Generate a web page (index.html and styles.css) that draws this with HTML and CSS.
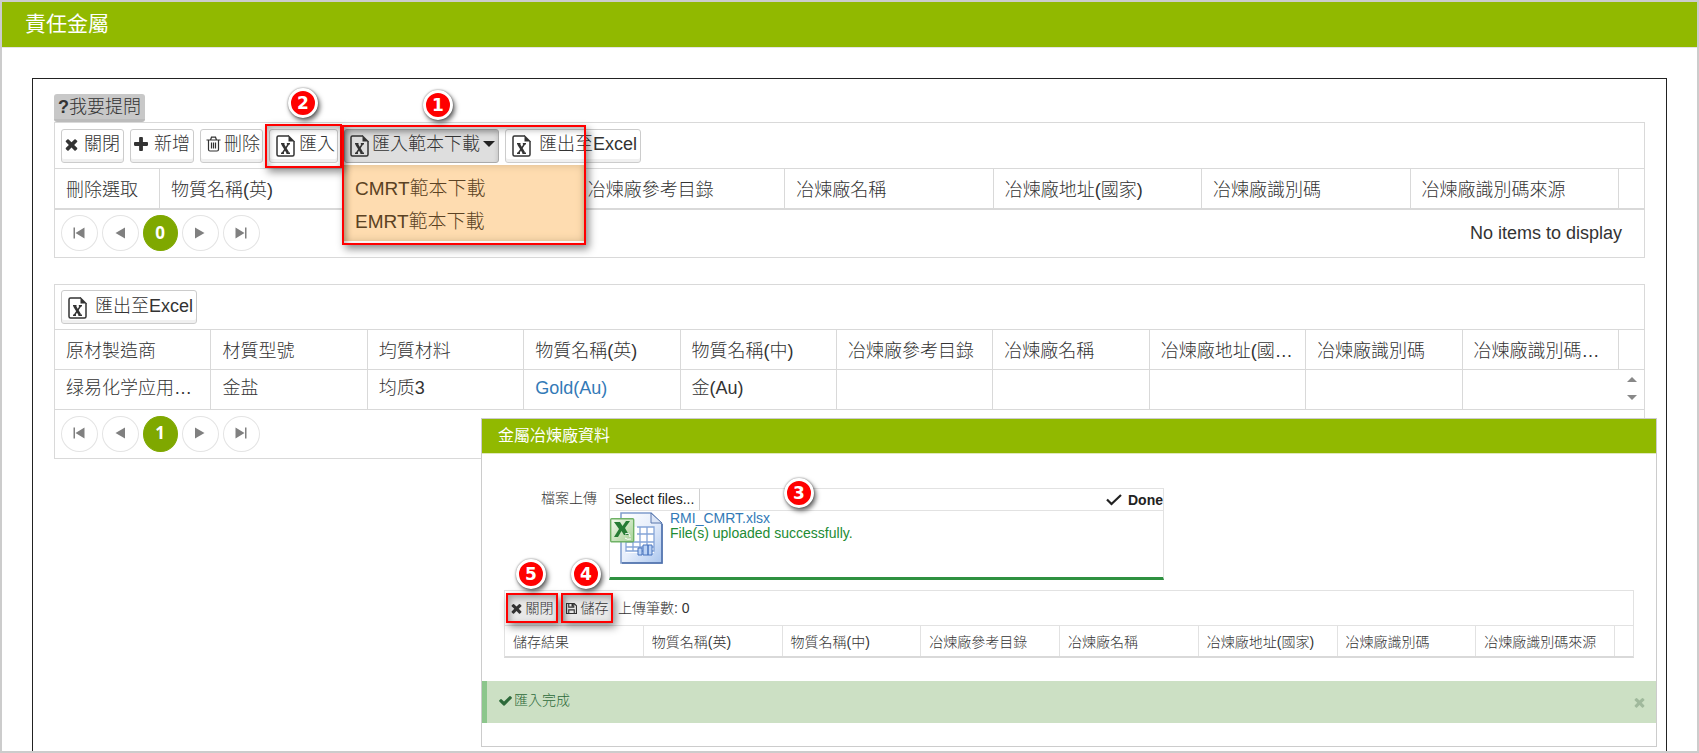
FILE: index.html
```html
<!DOCTYPE html>
<html lang="zh-Hant">
<head>
<meta charset="utf-8">
<title>責任金屬</title>
<link rel="stylesheet" href="styles.css">
</head>
<body>
<svg class="sprite" aria-hidden="true">
  <symbol id="times" viewBox="250 250 1290 1330"><path d="M1490 1322q0 40-28 68l-136 136q-28 28-68 28t-68-28l-294-294-294 294q-28 28-68 28t-68-28l-136-136q-28-28-28-68t28-68l294-294-294-294q-28-28-28-68t28-68l136-136q28-28 68-28t68 28l294 294 294-294q28-28 68-28t68 28l136 136q28 28 28 68t-28 68l-294 294 294 294q28 28 28 68z"/></symbol>
  <symbol id="plus" viewBox="190 128 1410 1410"><path d="M1600 736v192q0 40-28 68t-68 28h-416v416q0 40-28 68t-68 28h-192q-40 0-68-28t-28-68v-416h-416q-40 0-68-28t-28-68v-192q0-40 28-68t68-28h416v-416q0-40 28-68t68-28h192q40 0 68 28t28 68v416h416q40 0 68 28t28 68z"/></symbol>
  <symbol id="check" viewBox="110 240 1570 1300"><path d="M1671 566q0 40-28 68l-724 724-136 136q-28 28-68 28t-68-28l-136-136-362-362q-28-28-28-68t28-68l136-136q28-28 68-28t68 28l294 295 656-657q28-28 68-28t68 28l136 136q28 28 28 68z"/></symbol>
  <symbol id="trash" viewBox="0 0 15 15"><path d="M0.500 3.500H14.500M4.500 3.500L5.500 0.700H9.500L10.500 3.500M2.500 3.500V13Q2.500 14.500 4 14.500H11Q12.500 14.500 12.500 13V3.500M5.500 6V12M7.500 6V12M9.500 6V12" fill="none" stroke="currentColor" stroke-width="1.200"/></symbol>
  <symbol id="xls" viewBox="0 0 19 22"><path d="M13 1H2.500Q1 1 1 2.500V19.500Q1 21 2.500 21H16.500Q18 21 18 19.500V6" fill="none" stroke="currentColor" stroke-width="1.500"/><path d="M12.500 0L19 6.500H12.500Z"/><path d="M6.500 9L12 18" stroke="currentColor" stroke-width="2.600"/><path d="M12.500 9L6.500 18M5 8.700H8.500M10.800 8.700H14M5 18.300H8M10.500 18.300H14" stroke="currentColor" stroke-width="1.400" fill="none"/></symbol>
  <symbol id="save" viewBox="0 0 12 12"><path d="M0.600 0.600H9L11.400 3V11.400H0.600ZM3 0.600V4.500H8.500V0.600M3 11.400V7.500H9V11.400" fill="none" stroke="currentColor" stroke-width="1.200"/><path d="M6 1H8V4H6Z"/></symbol>
  <symbol id="tick" viewBox="0 0 16 12"><path d="M1 5.500L5.500 10L15 1" fill="none" stroke="currentColor" stroke-width="2.200"/></symbol>
  <symbol id="first" viewBox="0 0 12 12"><path d="M0.500 0.500H2V11.500H0.500ZM11.500 0.500V11.500L2.500 6Z"/></symbol>
  <symbol id="prev" viewBox="0 0 12 12"><path d="M11 0.500V11.500L1.500 6Z"/></symbol>
  <symbol id="next" viewBox="0 0 12 12"><path d="M1 0.500V11.500L10.500 6Z"/></symbol>
  <symbol id="last" viewBox="0 0 12 12"><path d="M11.500 0.500H10V11.500H11.500ZM0.500 0.500V11.500L9.500 6Z"/></symbol>
</svg>
<div class="frame">
  <header class="titlebar"><h1>責任金屬</h1></header>
  <main class="panel">
    <button class="ask" type="button"><b>?</b>我要提問</button>
    <section class="grid">
      <div class="toolbar">
        <button class="btn" type="button"><svg class="i13"><use href="#times"/></svg>關閉</button>
        <button class="btn" type="button"><svg class="i14"><use href="#plus"/></svg>新增</button>
        <button class="btn tight" type="button"><svg class="i15"><use href="#trash"/></svg>刪除</button>
        <div class="anchor">
          <button class="btn import" type="button"><svg class="xls"><use href="#xls"/></svg>匯入</button>
          <span class="mark mark-import"><span class="badge">2</span></span>
        </div>
        <div class="anchor">
          <button class="btn open" type="button"><svg class="xls"><use href="#xls"/></svg>匯入範本下載<i class="caret"></i></button>
          <div class="menu"><a href="#cmrt">CMRT範本下載</a><a href="#emrt">EMRT範本下載</a></div>
          <span class="mark mark-menu"><span class="badge">1</span></span>
        </div>
        <button class="btn export" type="button"><svg class="xls"><use href="#xls"/></svg>匯出至Excel</button>
      </div>
      <table>
        <colgroup><col class="c-pick"><col><col><col><col><col><col><col><col class="c-end"></colgroup>
        <thead><tr><th>刪除選取</th><th>物質名稱(英)</th><th></th><th>冶煉廠參考目錄</th><th>冶煉廠名稱</th><th>冶煉廠地址(國家)</th><th>冶煉廠識別碼</th><th>冶煉廠識別碼來源</th><th></th></tr></thead>
      </table>
      <div class="pager double">
        <button type="button" aria-label="First"><svg><use href="#first"/></svg></button>
        <button type="button" aria-label="Previous"><svg><use href="#prev"/></svg></button>
        <button type="button" class="current">0</button>
        <button type="button" aria-label="Next"><svg><use href="#next"/></svg></button>
        <button type="button" aria-label="Last"><svg><use href="#last"/></svg></button>
        <span class="info">No items to display</span>
      </div>
    </section>
    <section class="grid second">
      <div class="toolbar short">
        <button class="btn export" type="button"><svg class="xls"><use href="#xls"/></svg>匯出至Excel</button>
      </div>
      <table>
        <colgroup><col><col><col><col><col><col><col><col><col><col><col class="c-end"></colgroup>
        <thead><tr><th>原材製造商</th><th>材質型號</th><th>均質材料</th><th>物質名稱(英)</th><th>物質名稱(中)</th><th>冶煉廠參考目錄</th><th>冶煉廠名稱</th><th>冶煉廠地址(國家)</th><th>冶煉廠識別碼</th><th>冶煉廠識別碼來源</th><th></th></tr></thead>
        <tbody><tr><td lang="zh-Hans">绿易化学应用材料</td><td lang="zh-Hans">金盐</td><td lang="zh-Hans">均质3</td><td><a href="#gold">Gold(Au)</a></td><td>金(Au)</td><td></td><td></td><td></td><td></td><td colspan="2"><div class="spin"><i class="up"></i><i class="down"></i></div></td></tr></tbody>
      </table>
      <div class="pager">
        <button type="button" aria-label="First"><svg><use href="#first"/></svg></button>
        <button type="button" aria-label="Previous"><svg><use href="#prev"/></svg></button>
        <button type="button" class="current">1</button>
        <button type="button" aria-label="Next"><svg><use href="#next"/></svg></button>
        <button type="button" aria-label="Last"><svg><use href="#last"/></svg></button>
      </div>
    </section>
  </main>
  <section class="dialog" role="dialog" aria-labelledby="dlg">
    <h2 id="dlg">金屬冶煉廠資料</h2>
    <div class="form">
      <span class="label">檔案上傳</span>
      <div class="upload">
        <div class="upload-head">
          <button class="select" type="button">Select files...</button>
          <span class="done"><svg><use href="#tick"/></svg>Done</span>
        </div>
        <div class="file">
          <svg class="doc" viewBox="0 0 53 52">
            <defs>
              <linearGradient id="pg" x1="0" y1="0" x2="1" y2="1"><stop offset="0" stop-color="#fff"/><stop offset=".5" stop-color="#e6eefb"/><stop offset="1" stop-color="#a9c5ee"/></linearGradient>
              <linearGradient id="gx" x1="0" y1="0" x2="1" y2="1"><stop offset="0" stop-color="#f4faef"/><stop offset="1" stop-color="#a5d195"/></linearGradient>
            </defs>
            <path d="M11 1H41L52 12V51H11Z" fill="url(#pg)" stroke="#7f9ccb" stroke-width="1.500"/>
            <path d="M12 51H52V12" fill="none" stroke="#4f70ab" stroke-width="1.500"/>
            <path d="M41 1V11H52Z" fill="#dbe5f6" stroke="#5877ad"/>
            <path d="M16 15H44V41H16Z" fill="#fff"/>
            <path d="M27 15H44V39H16V30M27 22H44M16 30H44M16 35H44M23 30V39M30 15V39M37 15V39" fill="none" stroke="#85a5d8" stroke-width="1.300"/>
            <path d="M28 36H32V43H28ZM33 33H38V43H33ZM38 33H42V43H38Z" fill="#bcd3f5" stroke="#4672bd"/>
            <rect x=".7" y="6.700" width="23" height="23" rx="1" fill="url(#gx)" stroke="#6fb265" stroke-width="1.400"/>
            <path d="M4 10H10L12.500 14L16 9H20L15 16L19 23H14L11.500 19L8 25H4L9 17Z" fill="#267c35"/>
            <path d="M15 22Q20 20 20 25M15 26Q17 28 21 27" stroke="#fff" fill="none"/>
          </svg>
          <div class="file-text"><a href="#file">RMI_CMRT.xlsx</a><span>File(s) uploaded successfully.</span></div>
        </div>
        <span class="badge badge-upload">3</span>
      </div>
    </div>
    <div class="grid small">
      <div class="toolbar">
        <div class="anchor">
          <button class="btn" type="button"><svg><use href="#times"/></svg>關閉</button>
          <span class="mark"><span class="badge">5</span></span>
        </div>
        <div class="anchor">
          <button class="btn" type="button"><svg><use href="#save"/></svg>儲存</button>
          <span class="mark"><span class="badge">4</span></span>
        </div>
        <span class="count">上傳筆數: 0</span>
      </div>
      <table>
        <colgroup><col><col><col><col><col><col><col><col><col class="c-end"></colgroup>
        <thead><tr><th>儲存結果</th><th>物質名稱(英)</th><th>物質名稱(中)</th><th>冶煉廠參考目錄</th><th>冶煉廠名稱</th><th>冶煉廠地址(國家)</th><th>冶煉廠識別碼</th><th>冶煉廠識別碼來源</th><th></th></tr></thead>
      </table>
    </div>
    <div class="alert" role="status">
      <svg class="ok"><use href="#check"/></svg><span>匯入完成</span>
      <button type="button" aria-label="Close"><svg><use href="#times"/></svg></button>
    </div>
  </section>
</div>
</body>
</html>
```
FILE: styles.css
```css
* { box-sizing: border-box; }
body {
  margin: 0;
  color: #333;
  font: 18px/24px "Liberation Sans", "Noto Sans CJK TC", sans-serif;
  font-weight: 300;
}
button { font: inherit; color: inherit; margin: 0; cursor: pointer; }
a { color: #337ab7; text-decoration: none; }
svg { fill: currentColor; flex: none; }
.sprite { display: none; }

.frame {
  position: relative;
  display: flex;
  flex-direction: column;
  height: 100vh;
  border: 2px solid #ccc;
  overflow: hidden;
}
.titlebar { flex: none; height: 46px; padding: 0 23px; background: #91b900; border-bottom: 1px solid #e4e4e4; }
.titlebar h1 { margin: 0; color: #fff; font-size: 21px; font-weight: 400; line-height: 44px; }

.panel {
  flex: 1;
  margin: 30px 30px 0;
  padding: 15px 21px 0;
  border: 1px solid #222;
  border-bottom: 0;
}
.ask {
  display: block;
  height: 28px;
  padding: 0 4px;
  background: #c8c8c8;
  border: 0;
  border-bottom: 3px solid #bbb;
  border-radius: 3px;
  line-height: 24px;
}
.ask b { font-weight: 700; }

.grid { border: 1px solid #d9d9d9; }
.second { margin-top: 26px; }
.toolbar { display: flex; align-items: center; gap: 6px; height: 45px; padding: 0 6px; }
.short { height: 44px; }
.anchor { position: relative; }
.btn {
  display: flex;
  align-items: center;
  justify-content: center;
  gap: 6px;
  height: 34px;
  padding: 0 3px 3px;
  background: #fff;
  border: 1px solid #ccc;
  border-radius: 3px;
  box-shadow: inset 0 -3px #f0f0f0;
  white-space: nowrap;
}
.tight { gap: 3px; padding-left: 5px; padding-right: 2px; }
.i13 { width: 13px; height: 13px; }
.i14 { width: 14px; height: 14px; }
.i15 { width: 15px; height: 16px; }
.xls { width: 19px; height: 22px; margin-top: 4px; }
.import { gap: 4px; padding-left: 6px; padding-right: 2px; }
.open { gap: 3px; padding-left: 5px; background: #dedede; box-shadow: inset 0 3px 5px #bbb; border-color: #aaa; }
.export { gap: 8px; padding-left: 6px; }
.caret { border: 6px solid transparent; border-top-color: #222; border-bottom: 0; }

.menu {
  position: absolute;
  z-index: 2;
  top: 36px;
  left: 0;
  width: 240px;
  padding: 7px 11px 3px;
  background: #fedcb0;
  box-shadow: inset 0 0 8px #d8b98e;
}
.menu a { display: block; color: #5b4223; font-size: 19px; line-height: 33px; }

.mark {
  position: absolute;
  z-index: 3;
  inset: -4px;
  border: 2px solid #f00;
  box-shadow: 3px 4px 8px rgba(0, 0, 0, .45), inset 2px 3px 6px rgba(0, 0, 0, .3);
  pointer-events: none;
}
.mark-import { inset: -5px -4px; }
.mark-menu { inset: -4px auto auto -2px; width: 244px; height: 120px; }
.badge {
  position: absolute;
  top: -38px;
  left: 21px;
  width: 30px;
  height: 30px;
  border: 3px solid #fff;
  border-radius: 50%;
  background: #f00;
  box-shadow: 2px 3px 5px rgba(0, 0, 0, .6), 0 0 2px rgba(0, 0, 0, .5);
  color: #fff;
  font: bold 17px/24px "DejaVu Sans", sans-serif;
  text-align: center;
}
.mark-menu .badge { left: 79px; top: -37px; }

table { width: 100%; table-layout: fixed; border-collapse: separate; border-spacing: 0; }
.c-pick { width: 105px; }
.c-end { width: 25px; }
th, td {
  height: 40px;
  padding: 0 11px;
  border-top: 1px solid #d9d9d9;
  border-right: 1px solid #d9d9d9;
  font-weight: 300;
  text-align: left;
  white-space: nowrap;
  overflow: hidden;
  text-overflow: ellipsis;
}
th { padding-top: 3px; }
td { padding-bottom: 3px; }
th:last-child, td:last-child { border-right: 0; }
td:last-child { padding-right: 7px; }
.spin { display: flex; flex-direction: column; align-items: flex-end; gap: 13px; }
.spin i { border: 5px solid transparent; }
.spin .up { border-bottom-color: #888; border-top: 0; }
.spin .down { border-top-color: #888; border-bottom: 0; }

.pager { display: flex; align-items: center; gap: 4px; height: 49px; padding: 0 22px 1px 6px; border-top: 1px solid #d9d9d9; }
.double { border-top-width: 2px; }
.pager button {
  display: flex;
  align-items: center;
  justify-content: center;
  width: 37px;
  height: 36px;
  padding: 0 1px 1px 0;
  background: #fff;
  border: 1px solid #e4e4e4;
  border-radius: 50%;
  color: #808080;
}
.pager svg { width: 12px; height: 12px; }
.pager .current { width: 35px; background: #7fa800; border-color: #7fa800; color: #fff; font: bold 17px/24px "Open Sans", sans-serif; }
.info { margin-left: auto; }

.dialog {
  position: absolute;
  z-index: 5;
  top: 416px;
  left: 479px;
  right: 40px;
  background: #fff;
  border: 1px solid #ccc;
  padding-bottom: 23px;
  font-size: 14px;
  line-height: 15px;
}
.dialog h2 { margin: 0; padding: 0 16px; background: #91b900; border-bottom: 1px solid #dfe8bd; color: #fff; font-size: 16px; font-weight: 400; line-height: 34px; }
.form { display: flex; padding: 34px 22px 0; }
.label { width: 93px; padding-top: 3px; margin-right: 12px; text-align: right; }
.upload { position: relative; width: 555px; border: 1px solid #e2e2e2; border-bottom: 3px solid #2e9140; }
.upload-head { display: flex; align-items: center; justify-content: space-between; height: 22px; border-bottom: 1px solid #e2e2e2; }
.select { height: 21px; padding: 0 5px; background: #fff; border: 0; border-right: 1px solid #d0d0d0; color: #222; }
.done { display: flex; align-items: center; gap: 6px; padding-top: 1px; color: #222; font-weight: 700; }
.done svg { width: 16px; height: 12px; }
.file { display: flex; gap: 7px; height: 66px; }
.doc { width: 53px; height: 52px; margin-top: 1px; }
.file-text { display: flex; flex-direction: column; }
.file-text span { color: #228b34; }
.badge-upload { top: -11px; left: 174px; }

.small { margin: 10px 22px 23px; border-color: #e2e2e2; border-bottom: 2px solid #d9d9d9; }
.small .toolbar { height: 34px; gap: 7px; padding: 0 3px; }
.small .btn { height: 26px; width: 48px; gap: 4px; padding: 0 1px; font-size: 14px; background: #e8e8e8; border: 0; border-radius: 0; box-shadow: none; }
.small .btn svg { width: 11px; height: 11px; }
.small .mark { inset: -2px; }
.small .badge { top: -36px; left: 8px; }
.small th { height: 31px; padding: 2px 9px 0 8px; border-color: #e2e2e2; }
.small .c-end { width: 18px; }

.alert { display: flex; align-items: center; gap: 2px; height: 42px; padding: 0 11px 3px 12px; background: #cce0c4; border-left: 5px solid #8cc68c; color: #2d6a3a; }
.ok { width: 13px; height: 11px; }
.alert button { display: flex; margin-left: auto; padding: 4px 0 0; background: none; border: 0; color: #a0b99c; }
.alert button svg { width: 11px; height: 11px; }
```
